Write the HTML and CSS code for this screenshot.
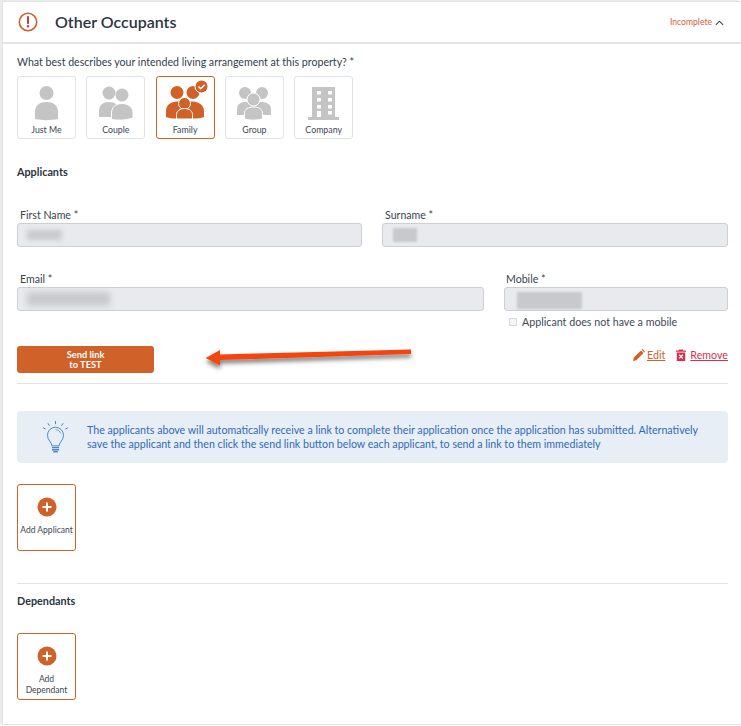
FILE: index.html
```html
<!DOCTYPE html>
<html lang="en">
<head>
<meta charset="utf-8">
<title>Other Occupants</title>
<link rel="stylesheet" href="styles.css">
</head>
<body>
<main class="card">
  <header class="card-head">
    <svg class="alert-icon" viewBox="0 0 20 20" width="20" height="20"><circle cx="10" cy="10" r="8.7" fill="none" stroke="#d06128" stroke-width="1.6"/><path d="M10 5v6.2" stroke="#c9354a" stroke-width="2" stroke-linecap="round"/><circle cx="10" cy="14.3" r="1.2" fill="#c9354a"/></svg>
    <h1 class="card-title">Other Occupants</h1>
    <span class="status">Incomplete</span>
    <svg class="chevron" viewBox="0 0 10 6" width="9" height="6"><path d="M1 5l4-4 4 4" fill="none" stroke="#2f4058" stroke-width="1.2"/></svg>
  </header>
  <div class="card-body">
    <p class="question">What best describes your intended living arrangement at this property? *</p>
    <div class="tiles">
      <button class="tile">
        <svg class="tile-icon" viewBox="0 0 57 38" width="57" height="38"><g fill="#c4c4c4"><circle cx="28.5" cy="9" r="7"/><path d="M17 35V28C17 21 22 18 28.5 18S40 21 40 28V35C33 36.5 24 36.5 17 35Z"/></g></svg>
        <span>Just Me</span>
      </button>
      <button class="tile">
        <svg class="tile-icon" viewBox="0 0 57 38" width="57" height="38"><g fill="#c4c4c4"><circle cx="22" cy="9" r="6.5"/><path d="M12 33V27C12 21 16 18 22 18S32 21 32 27V33Z"/><circle cx="35" cy="11" r="6.5"/><path d="M24.500 35.500V29C24.500 23 29 19.500 35 19.500S46 23 46 29V34C39 36.500 31 36.500 24.500 35.500Z" stroke="#fff" stroke-width="1"/></g></svg>
        <span>Couple</span>
      </button>
      <button class="tile tile-active">
        <svg class="tile-icon" viewBox="0 0 57 38" width="57" height="38"><g fill="#d06128"><circle cx="20" cy="8.500" r="6.500"/><circle cx="36" cy="8.500" r="6.500"/><path d="M9 33V27C9 21 14 17.500 20 17.500S29 20 29 24V33C22 35 15 35 9 33Z"/><path d="M27 33V24C27 20 31 17.500 36 17.500S47 21 47 27V33C41 35 33 35 27 33Z"/><circle cx="27.500" cy="19.500" r="6" stroke="#fff"/><path d="M19.500 35V30.500C19.500 27 23 24.500 27.500 24.500S35.500 27 35.500 30.500V35Z" stroke="#fff"/><circle cx="44.500" cy="2.500" r="6.500" stroke="#fff"/></g><path d="M41.500 2.500l2.200 2.200 4-4" fill="none" stroke="#fff" stroke-width="1.500"/></svg>
        <span>Family</span>
      </button>
      <button class="tile">
        <svg class="tile-icon" viewBox="0 0 57 38" width="57" height="38"><g fill="#c4c4c4"><circle cx="19" cy="9" r="6"/><circle cx="36" cy="9" r="6"/><path d="M11 31V25C11 20 15 18 19 18H36C41 18 45 21 45 25V31Z"/><circle cx="27.500" cy="15.500" r="6.500" stroke="#fff"/><path d="M18.500 35V29.500C18.500 25 22.500 23 27.500 23S36.500 25 36.500 29.500V35C30 36.500 24 36.500 18.500 35Z" stroke="#fff"/></g></svg>
        <span>Group</span>
      </button>
      <button class="tile">
        <svg class="tile-icon" viewBox="0 0 57 38" width="57" height="38"><path fill="#c4c4c4" d="M17 3h23v30h4v3H13v-3h4z"/><g fill="#fff"><rect x="22" y="7" width="4" height="3.500"/><rect x="33" y="7" width="4" height="3.500"/><rect x="22" y="14" width="4" height="3.500"/><rect x="33" y="14" width="4" height="3.500"/><rect x="22" y="21" width="4" height="3.500"/><rect x="33" y="21" width="4" height="3.500"/><rect x="22" y="27" width="4" height="6"/><rect x="33" y="27" width="4" height="3.500"/></g></svg>
        <span>Company</span>
      </button>
    </div>

    <h2 class="section-title section-applicants">Applicants</h2>

    <div class="form-row row-name">
      <div class="field">
        <label class="field-label">First Name *</label>
        <div class="input"><span class="redact redact-first"></span></div>
      </div>
      <div class="field">
        <label class="field-label">Surname *</label>
        <div class="input"><span class="redact redact-sur"></span></div>
      </div>
    </div>

    <div class="form-row row-contact">
      <div class="field">
        <label class="field-label">Email *</label>
        <div class="input"><span class="redact redact-email"></span></div>
      </div>
      <div class="field">
        <label class="field-label field-label-tight">Mobile *</label>
        <div class="input"><span class="redact redact-mobile"></span></div>
        <div class="check-row"><span class="checkbox"></span><span>Applicant does not have a mobile</span></div>
      </div>
    </div>

    <div class="action-row">
      <button class="send-btn">Send link<br>to TEST</button>
      <svg class="arrow" viewBox="0 0 220 30" width="220" height="30"><defs><filter id="sh" x="-5%" y="-50%" width="110%" height="220%"><feDropShadow dx="0" dy="3.500" stdDeviation="2" flood-color="#000" flood-opacity=".5"/></filter></defs><path d="M207 4.500V9L16 15V20.500L1.700 13L16 5V9.500Z" fill="#f3440f" filter="url(#sh)"/></svg>
      <div class="row-links">
        <a class="link link-edit"><svg viewBox="0 0 12 12" width="12" height="12"><path fill="#d06128" d="M0 12l.8-3.400L8 1.400l2.600 2.600-7.200 7.200zM8.800.6l.8-.6 2.400 2.400-.6.800-.2.200-2.600-2.600z"/></svg><span>Edit</span></a>
        <a class="link link-remove"><svg viewBox="0 0 10 12" width="10" height="12"><path fill="#d8304a" d="M0 1.500h3V.4h4v1.100h3v1.200H0zM.8 3.400h8.400V12H.8z"/><path d="M3.200 5.800l3.600 3.600m0-3.600l-3.600 3.600" stroke="#fff" stroke-width="1.300"/></svg><span>Remove</span></a>
      </div>
    </div>
    <hr class="rule rule-one">

    <div class="info">
      <svg class="bulb" viewBox="0 0 30 36" width="27" height="32"><g fill="none" stroke="#4a84c9" stroke-width="1.100"><path d="M11 28c0-4-5-6-5-12a9 9 0 0 1 18 0c0 6-5 8-5 12z"/><path d="M15 9.500a6.500 6.500 0 0 1 6 4.500" stroke-width=".8"/><path d="M15 0v3.500M6.500 2.500l1.800 3M23.500 2.500l-1.800 3M1 7.500l3 1.700M29 7.500l-3 1.700"/></g><path stroke="#4a84c9" stroke-width="1.500" d="M11 30h8M11 32.300h8M12.500 34.600h5"/></svg>
      <p class="info-text">The applicants above will automatically receive a link to complete their application once the application has submitted. Alternatively save the applicant and then click the send link button below each applicant, to send a link to them immediately</p>
    </div>

    <button class="add-tile add-applicant">
      <svg viewBox="0 0 20 20" width="20" height="20"><circle cx="10" cy="10" r="9.500" fill="#d06128"/><path d="M10 5.500v9M5.500 10h9" stroke="#fff" stroke-width="2"/></svg>
      <span>Add Applicant</span>
    </button>

    <hr class="rule rule-two">
    <h2 class="section-title section-dependants">Dependants</h2>

    <button class="add-tile add-dependant">
      <svg viewBox="0 0 20 20" width="20" height="20"><circle cx="10" cy="10" r="9.500" fill="#d06128"/><path d="M10 5.500v9M5.500 10h9" stroke="#fff" stroke-width="2"/></svg>
      <span>Add<br>Dependant</span>
    </button>
  </div>
</main>
</body>
</html>
```
FILE: styles.css
```css
* { box-sizing: border-box; }
html, body { margin: 0; padding: 0; }
body {
  height: 726px;
  overflow: hidden;
  background: #fff;
  font-family: Lato, "Liberation Sans", sans-serif;
  color: #2f3a4a;
}
button { font-family: inherit; cursor: pointer; }
.card {
  margin: 1px 0 0 2px;
  height: 724px;
  background: #fff;
  border-top: 1px solid #e3e3e3;
  border-left: 1px solid #e3e3e3;
  border-bottom: 1px solid #e3e3e3;
  box-shadow: -2px -1px 0 #ececec;
}
.card-head {
  display: flex;
  align-items: center;
  height: 42px;
  padding: 0 17px 0 15px;
  border-bottom: 2px solid #e3e3e3;
}
.alert-icon { margin-right: 17px; }
.card-title {
  flex: 1;
  margin: 0 0 2px;
  font-size: 16px;
  font-weight: 600;
  color: #2b3442;
}
.status { font-size: 8.600px; color: #dc5a3a; margin-right: 3px; }
.chevron { margin-top: 1px; }
.card-body { padding: 0 13px 0 14px; }
.question { margin: 11px 0 0; font-size: 10.600px; line-height: 15px; color: #333d4c; }
.tiles { display: flex; gap: 10.300px; margin-top: 6px; }
.tile {
  display: flex;
  flex-direction: column;
  align-items: center;
  width: 59px;
  height: 63px;
  padding: 7px 0 0;
  background: #fff;
  border: 1px solid #dfe2e7;
  border-radius: 3px;
  font-size: 8.800px;
  color: #3c4656;
}
.tile-icon { display: block; flex: none; }
.tile span { margin-top: 2px; line-height: 12px; }
.tile-active { border-color: #d06128; }
.tile-active .tile-icon { overflow: visible; }
.section-title { margin: 0; font-size: 10.800px; font-weight: 700; line-height: 14px; color: #2b3442; }
.section-applicants { margin-top: 26px; }
.form-row { display: grid; gap: 20px; }
.row-name { grid-template-columns: 345px 346px; margin-top: 29px; }
.row-contact { grid-template-columns: 467px 224px; margin-top: 25px; }
.field-label {
  display: block;
  padding-left: 3px;
  height: 15px;
  font-size: 10.600px;
  line-height: 14px;
  color: #39434f;
}
.field-label-tight { padding-left: 2px; }
.input {
  height: 24px;
  background: #e8eaed;
  border: 1px solid #ccd0d4;
  border-radius: 3px;
  padding: 4px 0 0 9px;
}
.redact {
  display: block;
  height: 14px;
  background: #c8c9cd;
  filter: blur(2.500px);
}
.redact-first { width: 35px; height: 10px; margin-top: 2px; }
.redact-sur { width: 24px; margin-left: 1px; filter: blur(.8px); }
.redact-email { width: 83px; filter: blur(3px); }
.redact-mobile { width: 65px; height: 17px; margin-left: 3px; filter: blur(.8px); }
.check-row {
  display: flex;
  align-items: center;
  gap: 5px;
  margin-top: 4px;
  padding-left: 5px;
  font-size: 10.700px;
  line-height: 14px;
  color: #3f4957;
}
.checkbox {
  width: 8px;
  height: 8px;
  border: 1px solid #d5d7da;
  background: #f6f6f6;
}
.action-row {
  position: relative;
  display: flex;
  align-items: center;
  justify-content: space-between;
  margin-top: 17px;
  height: 27px;
}
.send-btn {
  width: 137px;
  height: 27px;
  padding: 0;
  border: 0;
  border-radius: 3px;
  background: #d06128;
  color: #fff;
  font-size: 9.300px;
  font-weight: 700;
  line-height: 10px;
}
.arrow { position: absolute; left: 187px; top: -1px; overflow: visible; }
.row-links { display: flex; gap: 11px; font-size: 10.700px; align-self: flex-start; margin-top: 2px; }
.link { display: flex; align-items: center; gap: 2px; text-decoration: underline; }
.link-edit { color: #d06128; }
.link-remove { color: #d8304a; gap: 4px; }
.rule { margin: 0; height: 1px; border: 0; background: #e2e3e5; }
.rule-one { margin-top: 10px; }
.info {
  display: flex;
  align-items: center;
  height: 52px;
  margin-top: 27px;
  padding: 0 16px 0 25px;
  background: #e8eef6;
  border-radius: 4px;
}
.bulb { flex: none; margin-right: 18px; }
.info-text { margin: 0; font-size: 10.650px; line-height: 14px; color: #2f6bb8; }
.add-tile {
  display: flex;
  flex-direction: column;
  align-items: center;
  width: 59px;
  height: 67px;
  padding: 12px 0 0;
  background: #fff;
  border: 1px solid #d06128;
  border-radius: 3px;
  font-size: 8.500px;
  line-height: 11px;
  color: #3c4656;
  white-space: nowrap;
}
.add-tile span { margin-top: 8px; }
.add-applicant { margin-top: 21px; }
.rule-two { margin-top: 32px; }
.section-dependants { margin-top: 10px; }
.add-dependant { margin-top: 25px; }
```
